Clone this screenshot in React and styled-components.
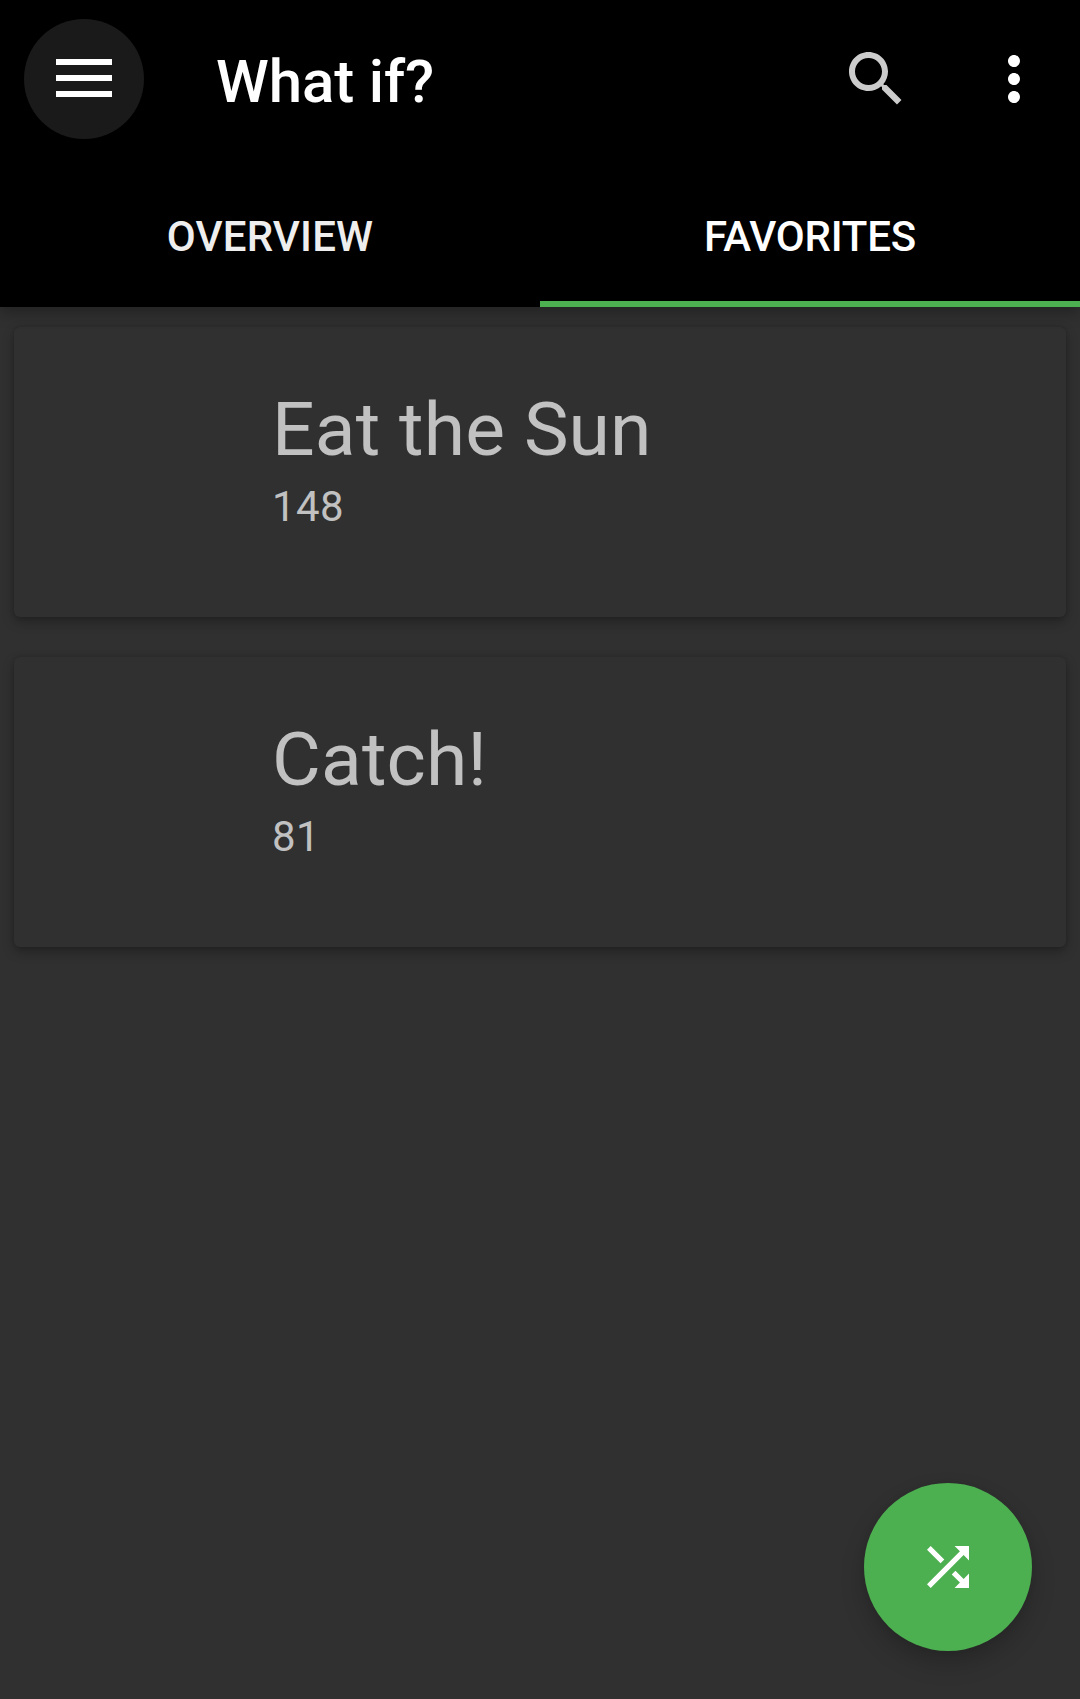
import React from "react";
import styled, { createGlobalStyle } from "styled-components";

const GlobalStyle = createGlobalStyle`
  * { box-sizing: border-box; }
  body {
    margin: 0;
    background: #303030;
    font-family: Roboto, "Noto Sans", sans-serif;
  }
  button {
    border: 0;
    padding: 0;
    background: none;
    color: inherit;
    font: inherit;
  }
  svg { display: block; }
`;

const Screen = styled.div`
  display: flex;
  flex-direction: column;
  height: 1699px;
  background: #303030;
  overflow: hidden;
`;

const AppBar = styled.header`
  position: relative;
  flex: none;
  height: 307px;
  background: #000;
  color: #fff;
  box-shadow: 0 6px 14px rgba(0, 0, 0, 0.28);
`;

const Toolbar = styled.div`
  display: flex;
  align-items: center;
  height: 163px;
  padding: 0 30px 5px 24px;
`;

const MenuButton = styled.button`
  display: flex;
  align-items: center;
  justify-content: center;
  width: 120px;
  height: 120px;
  padding-bottom: 2px;
  border-radius: 50%;
  background: #1a1a1a;
`;

const Title = styled.h1`
  flex: 1;
  margin: 0 0 0 72px;
  padding-top: 6px;
  font-size: 60px;
  line-height: 70px;
  font-weight: 500;
  letter-spacing: -0.12px;
`;

const Actions = styled.div`
  display: flex;
  gap: 66px;
`;

const IconButton = styled.button`
  width: 72px;
  height: 72px;
  color: ${(p) => p.$color};
`;

const Tabs = styled.nav`
  display: flex;
  height: 144px;
`;

const Tab = styled.button`
  flex: 1;
  height: 144px;
  padding-top: 9px;
  border-bottom: 6px solid ${(p) => (p.$active ? "#4caf50" : "transparent")};
  color: ${(p) => (p.$active ? "#fff" : "#eee")};
  font-size: 42px;
  line-height: 50px;
  font-weight: 500;
  letter-spacing: ${(p) => (p.$active ? "-0.22px" : "0.15px")};
  text-transform: uppercase;
`;

const List = styled.main`
  display: flex;
  flex-direction: column;
  gap: 40px;
  padding: 20px 14px;
`;

const Card = styled.article`
  height: 290px;
  padding: 58px 24px 0 258px;
  border-radius: 6px;
  background: #303030;
  color: #c1c1c1;
  box-shadow: 0 5px 12px rgba(0, 0, 0, 0.28), 0 0 4px rgba(0, 0, 0, 0.14);
`;

const CardTitle = styled.h2`
  margin: 0;
  font-size: 75px;
  line-height: 88px;
  font-weight: 400;
  letter-spacing: 0.14px;
`;

const CardNumber = styled.p`
  margin: 9px 0 0;
  font-size: 42px;
  line-height: 50px;
  letter-spacing: 0.4px;
`;

const Fab = styled.button`
  position: fixed;
  right: 48px;
  bottom: 48px;
  display: flex;
  align-items: center;
  justify-content: center;
  width: 168px;
  height: 168px;
  border-radius: 50%;
  background: #4caf50;
  color: #fff;
  box-shadow: 0 12px 24px rgba(0, 0, 0, 0.2), 0 0 12px rgba(0, 0, 0, 0.08);
`;

const MenuIcon = () => (
  <svg width="56" height="38" viewBox="0 0 56 38" fill="currentColor">
    <path d="M0 0h56v6H0zM0 16h56v6H0zM0 32h56v6H0z" />
  </svg>
);

const Icon = ({ size, viewBox = "0 0 24 24", d }) => (
  <svg width={size} height={size} viewBox={viewBox} fill="currentColor">
    <path d={d} />
  </svg>
);

const SEARCH =
  "M15.5 14h-.79l-.28-.27C15.41 12.59 16 11.11 16 9.5 16 5.91 13.09 3 9.5 3S3 5.91 3 9.5 5.91 16 9.5 16c1.61 0 3.09-.59 4.23-1.57l.27.28v.79l5 4.99L20.49 19l-4.99-5zm-6 0C7.01 14 5 11.99 5 9.5S7.01 5 9.5 5 14 7.01 14 9.5 11.99 14 9.5 14z";
const MORE =
  "M12 8c1.1 0 2-.9 2-2s-.9-2-2-2-2 .9-2 2 .9 2 2 2zm0 2c-1.1 0-2 .9-2 2s.9 2 2 2 2-.9 2-2-.9-2-2-2zm0 6c-1.1 0-2 .9-2 2s.9 2 2 2 2-.9 2-2-.9-2-2-2z";
const SHUFFLE =
  "M10.59 9.17L5.41 4 4 5.41l5.17 5.17 1.42-1.41zM14.5 4l2.04 2.04L4 18.59 5.41 20 17.96 7.46 20 9.5V4h-5.5zm.33 9.41l-1.41 1.41 3.13 3.13L14.5 20H20v-5.5l-2.04 2.04-3.13-3.13z";

const favorites = [
  { title: "Eat the Sun", number: 148 },
  { title: "Catch!", number: 81 },
];

export default function App() {
  return (
    <Screen>
      <GlobalStyle />
      <AppBar>
        <Toolbar>
          <MenuButton aria-label="Menu">
            <MenuIcon />
          </MenuButton>
          <Title>What if?</Title>
          <Actions>
            <IconButton $color="#ccc" aria-label="Search">
              <Icon size={72} d={SEARCH} />
            </IconButton>
            <IconButton $color="#fff" aria-label="More">
              <Icon size={72} d={MORE} />
            </IconButton>
          </Actions>
        </Toolbar>
        <Tabs>
          <Tab>Overview</Tab>
          <Tab $active>Favorites</Tab>
        </Tabs>
      </AppBar>
      <List>
        {favorites.map((item) => (
          <Card key={item.number}>
            <CardTitle>{item.title}</CardTitle>
            <CardNumber>{item.number}</CardNumber>
          </Card>
        ))}
      </List>
      <Fab aria-label="Random">
        <Icon size={84} viewBox="-4 -4 32 32" d={SHUFFLE} />
      </Fab>
    </Screen>
  );
}
